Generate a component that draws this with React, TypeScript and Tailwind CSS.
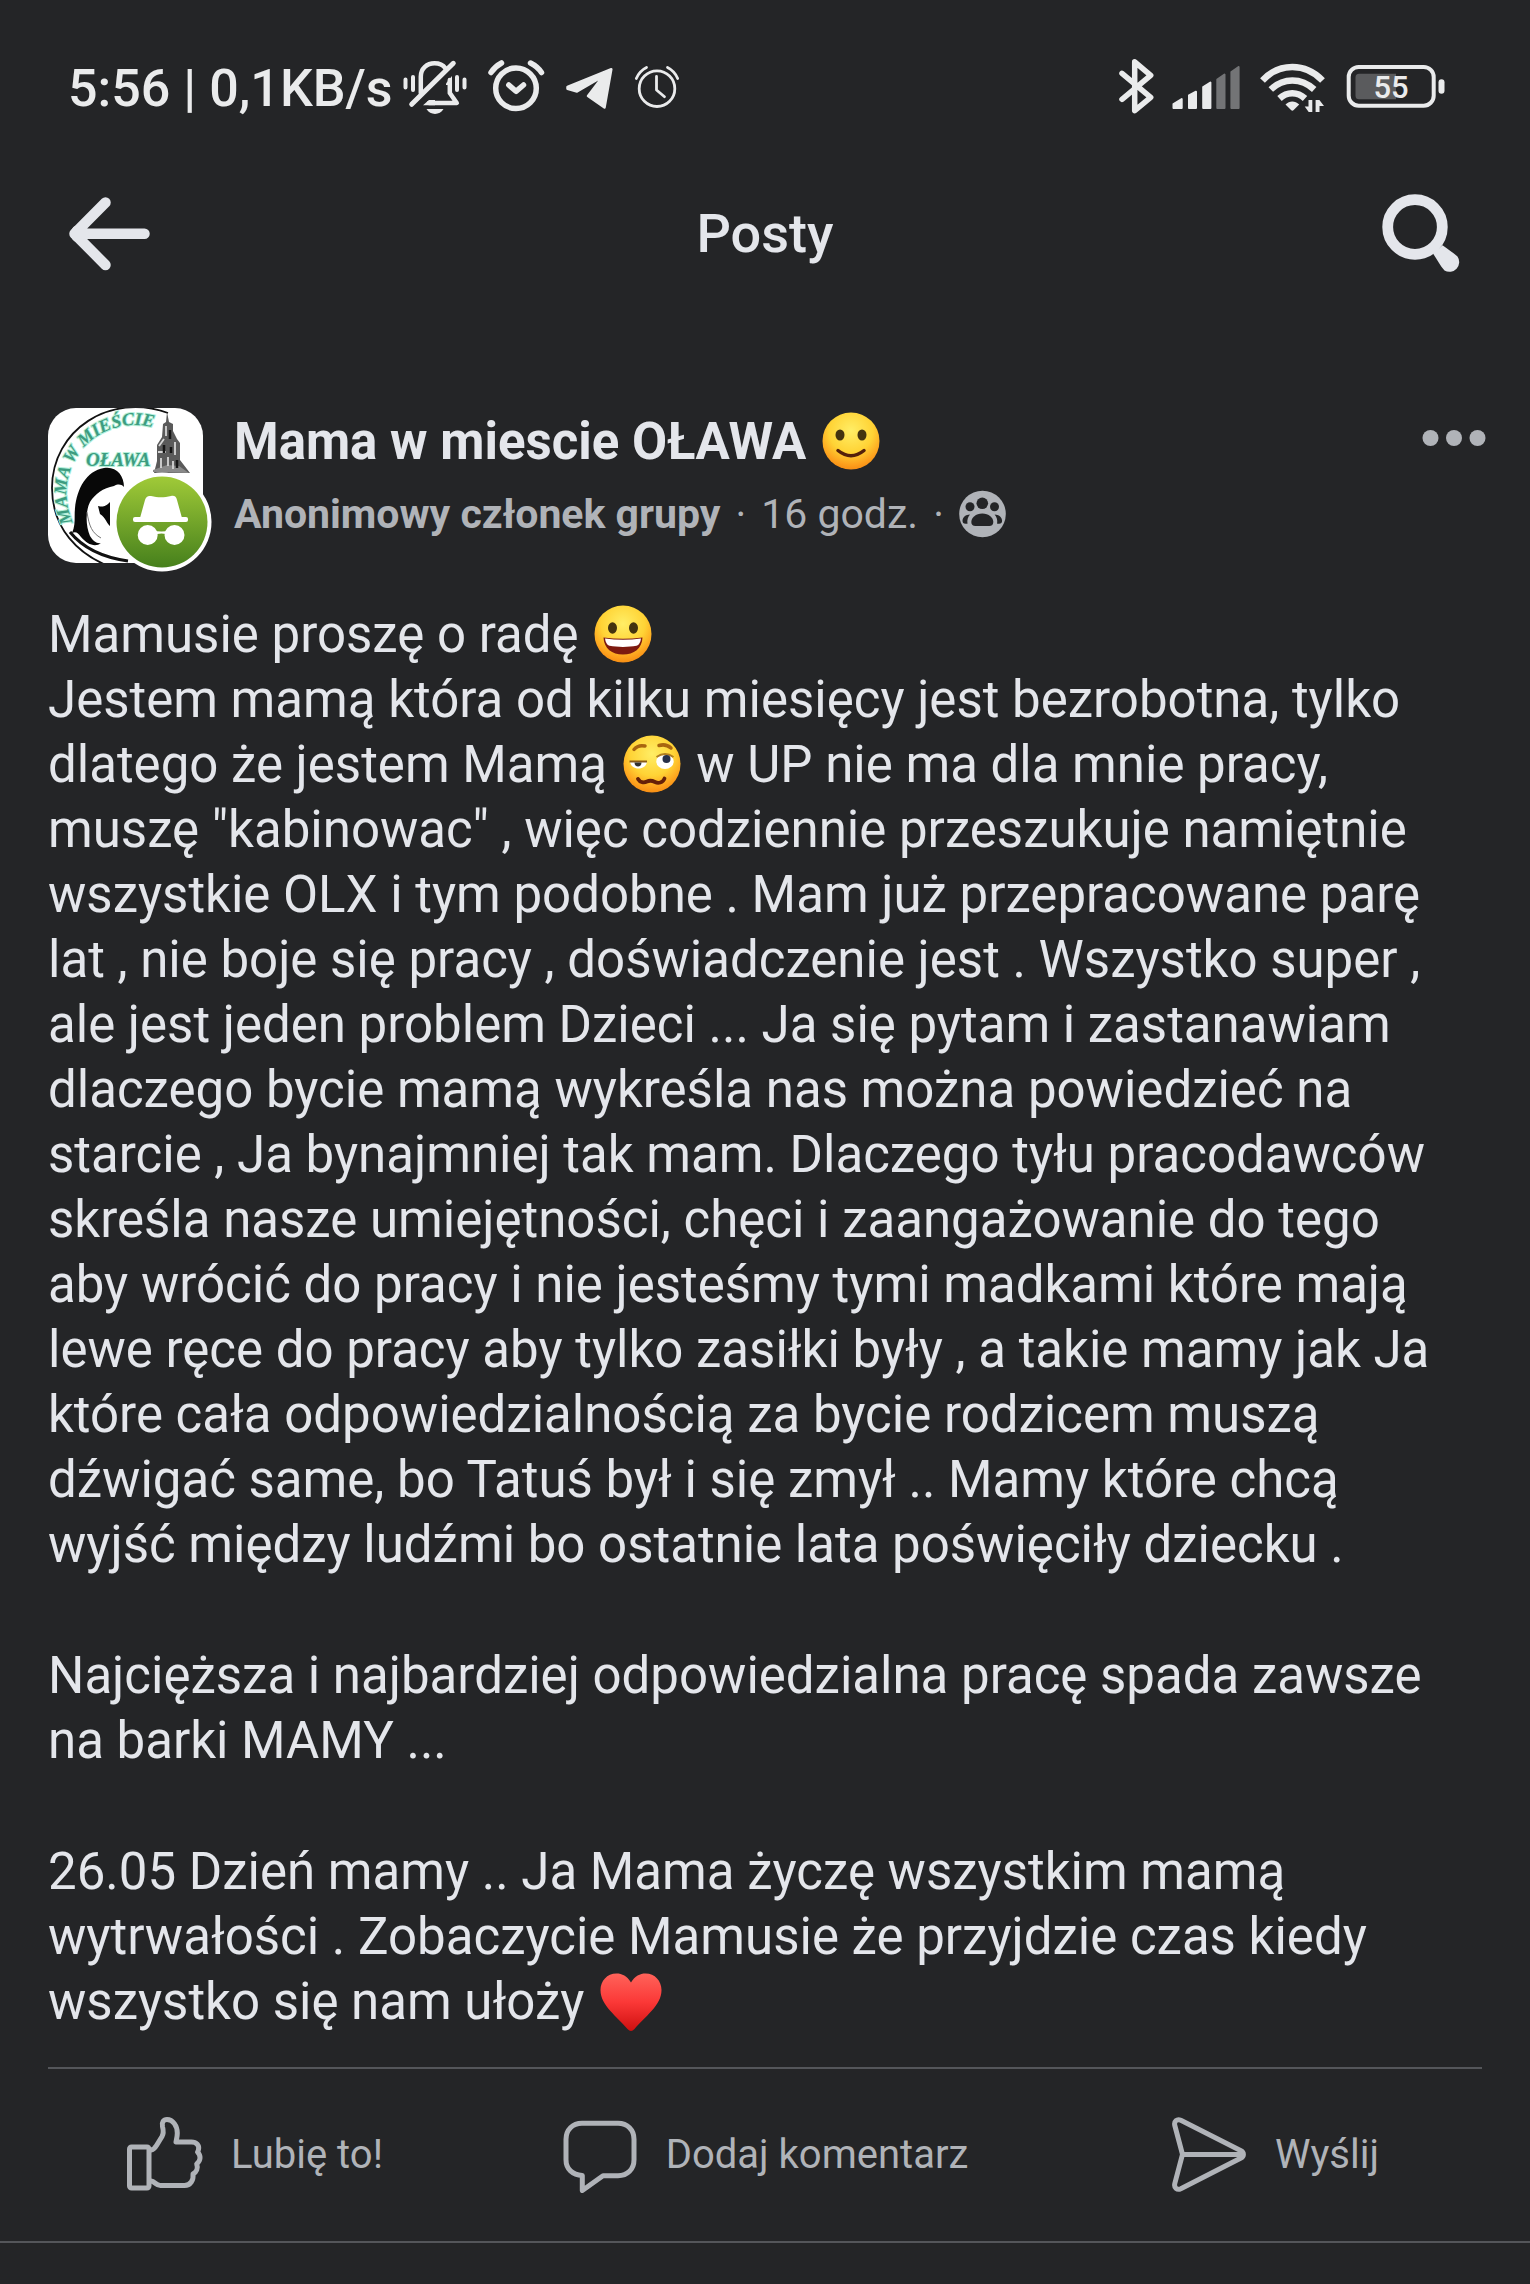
import type { ReactNode } from 'react';

interface IconProps {
  className?: string;
}

const BellOffIcon = () => (
  <svg className="w-16 h-15" viewBox="0 0 64 60" fill="none" stroke="currentColor" strokeWidth="4.5" strokeLinecap="round" strokeLinejoin="round">
    <path d="M2.500 20.500v8M10 18v13M54 18v13M61.500 20.500v8" strokeWidth="4" />
    <path d="M17.800 34V17.500C17.800 9.500 24 4.300 31.500 4.300c4.500 0 8.500 1.700 11 5" />
    <path d="M8.700 45.300 50.300 4.300" strokeWidth="5" />
    <path d="M46.800 21v13l7 10H26" />
    <path d="M43 24.500 49 17v9h-6z" fill="currentColor" stroke="none" />
    <path d="M20 46.300 26 41h6v5.300z" fill="currentColor" stroke="none" />
    <path d="M23.500 50h17c-2 3.300-5 4.900-8.500 4.900S25.500 53.300 23.500 50z" fill="currentColor" stroke="none" />
  </svg>
);

const AlarmCheckIcon = () => (
  <svg className="w-[58px] h-15" viewBox="0 0 58 60" fill="none" stroke="currentColor" strokeWidth="5.500" strokeLinecap="round" strokeLinejoin="round">
    <circle cx="29" cy="29.300" r="20.300" />
    <path d="m21.800 26 7.200 6.300 7.500-6.300" />
    <path d="M4 13.500Q8 7.500 14.500 4M43.500 4Q50.500 7.500 54.500 13.500" />
  </svg>
);

const TelegramIcon = () => (
  <svg className="w-[49px] h-15" viewBox="0 0 49 60" fill="currentColor" stroke="currentColor" strokeWidth="2.500" strokeLinejoin="round">
    <path d="M2.500 28 46.300 10.200 39.500 48.500 23 37 34 22.500c.8-1.500-.8-2.500-2.200-1.700L12 32.500 2.500 29.800z" />
  </svg>
);

const ClockIcon = () => (
  <svg className="w-[47px] h-15" viewBox="0 0 47 60" fill="none" stroke="currentColor" strokeWidth="2.800" strokeLinecap="round" strokeLinejoin="round">
    <circle cx="23" cy="29.700" r="17.800" />
    <path d="M22.500 17.500V31l8 6.700" />
    <path d="M2.300 19.500Q5.500 12 12.500 8.500M33.500 8.500Q40.500 12 43.700 19.500" />
  </svg>
);

const BluetoothIcon = () => (
  <svg className="w-[38px] h-15" viewBox="0 0 38 60" fill="none" stroke="currentColor" strokeWidth="5.500" strokeLinecap="round" strokeLinejoin="round">
    <path d="m6 14.300 28.700 24-16 13.400V2.800l16 13.500L6 40.300" />
  </svg>
);

const SignalIcon = () => (
  <svg className="w-[69px] h-15" viewBox="0 0 69 60" fill="currentColor" stroke="currentColor" strokeWidth="2" strokeLinejoin="round">
    <path d="M1.500 45 9.700 40v9H1.500zM17 36.500 24 32.700V49h-7zM31.200 28l7.200-4.500V49h-7.200z" />
    <g opacity=".4">
      <path d="M45.300 20.500l7.200-5V49h-7.200zM59.400 13l7.200-5V49h-7.200z" />
    </g>
  </svg>
);

const WifiIcon = () => (
  <svg className="w-[68px] h-15" viewBox="0 0 68 60" fill="none" stroke="currentColor" strokeWidth="6.500">
    <path d="M3.500 21.500C20 3.500 46.500 3.500 63.500 21.500" />
    <path d="M11.800 30.500c12.500-12 30.500-12 43.400 0" />
    <path d="M20.500 39.500c7.500-7 18-7 25.500 0" />
    <path d="M26.500 45.500c4-4 9.500-4 13.700 0l-5.500 5.500c-1 .9-1.700.9-2.700 0z" fill="currentColor" stroke="none" />
    <path d="M53.300 41v12h-3.600l-4-5.500h3.800V41zM56.600 53V41h3.800l4.600 6h-4.500v6z" fill="currentColor" stroke="none" />
  </svg>
);

const BatteryIcon = () => (
  <svg className="w-[101px] h-15" viewBox="0 0 101 60">
    <rect x="3.700" y="8" width="85" height="38.700" rx="10" fill="none" stroke="currentColor" strokeWidth="4" />
    <path d="M14 14.700h37v25.600H14a3.500 3.500 0 0 1-3.500-3.500V18.200a3.500 3.500 0 0 1 3.500-3.500z" fill="#5a5b5d" />
    <rect x="93.500" y="20.300" width="6" height="14.400" rx="3" fill="currentColor" />
    <text x="46" y="39" textAnchor="middle" fontSize="31" fontWeight="500" fill="currentColor">55</text>
  </svg>
);

const BackIcon = () => (
  <svg className="w-21 h-20" viewBox="0 0 84 80" fill="none" stroke="currentColor" strokeWidth="10.500" strokeLinecap="round" strokeLinejoin="round">
    <path d="M37.500 8.500 6.500 39.700 37.500 71M8 39.700h68.500" />
    <path d="M9 37v5.500l6-2.800z" />
  </svg>
);

const SearchIcon = () => (
  <svg className="w-20 h-20" viewBox="0 0 80 80">
    <circle cx="33" cy="33" r="27.300" fill="none" stroke="currentColor" strokeWidth="10.800" />
    <path d="M51 59.500 60.500 51.300C66 55.500 71 58.500 75.500 62.500A9.800 9.800 0 0 1 62.500 76.500C58 71.500 55 65.500 51 59.500z" fill="currentColor" />
  </svg>
);

const DotsIcon = () => (
  <svg className="w-16 h-15" viewBox="0 0 64 60" fill="currentColor">
    <circle cx="8.500" cy="30" r="8" />
    <circle cx="32" cy="30" r="8" />
    <circle cx="55.500" cy="30" r="8" />
  </svg>
);

const GroupIcon = () => (
  <svg className="w-12 h-12" viewBox="0 0 48 48" role="img" aria-label="Grupa">
    <circle cx="23.500" cy="24" r="23.300" fill="#b0b3b8" />
    <g fill="#242527">
      <circle cx="23.300" cy="13.300" r="5.800" />
      <circle cx="11" cy="16.700" r="4.500" />
      <circle cx="35.500" cy="16.700" r="4.500" />
      <path d="M23.300 23.500c6.500 0 11 4.200 11 8.500 0 2.600-1.500 4-4 4h-14c-2.500 0-4-1.400-4-4 0-4.300 4.500-8.500 11-8.500z" />
      <path d="M11 24.500c-4.300.2-7.300 2.500-7.500 6.300 0 1.800 1 3 3 3h2c-.6-3.800.3-6.800 2.500-9.300zM35.600 24.500c4.300.2 7.300 2.500 7.500 6.300 0 1.800-1 3-3 3h-2c.6-3.800-.3-6.800-2.500-9.300z" />
    </g>
  </svg>
);

const LikeIcon = ({ className }: IconProps) => (
  <svg className={className} viewBox="0 0 76 76" fill="none" stroke="currentColor" strokeWidth="5" strokeLinejoin="round" strokeLinecap="round">
    <rect x="2.500" y="30" width="19.500" height="41" rx="2" />
    <path d="M24 33c3-.3 4-2 5.500-4.500l5.500-9c2-3.500 1.500-6 .5-10-1-4.500 1-7 4.500-7 6 0 10.300 6.500 10.300 13.500 0 3.500-.8 6-1.300 9h15.500c5 0 8 3.500 7 7.500-.2 1.500-1 2.500-1 2.500 3.500 3.500 3.500 8.500-.8 12 1.500 4-.2 8-3.700 10 .8 6-2.500 11.500-8.500 11.500H33.500c-4.500 0-5.500-4-9.500-4.500" />
  </svg>
);

const CommentIcon = ({ className }: IconProps) => (
  <svg className={className} viewBox="0 0 76 76" fill="none" stroke="currentColor" strokeWidth="5" strokeLinejoin="round">
    <path d="M20 6.300h36c9.500 0 16 6.500 16 16v20.400c0 9.500-6.500 16-16 16H41L20.300 73.500V58.500C10.500 58 4 52 4 42.700V22.300c0-9.500 6.500-16 16-16z" />
  </svg>
);

const SendIcon = ({ className }: IconProps) => (
  <svg className={className} viewBox="0 0 76 76" fill="none" stroke="currentColor" strokeWidth="5" strokeLinejoin="round">
    <path d="M11.500 37.400 3.800 8.500C2.800 4.500 6 1.500 9.800 3.300L70 33.800c3.200 1.700 3.200 5.500 0 7.200L9.800 71.700C6 73.500 2.800 70.500 3.800 66.500zM11.500 37.400H71" />
  </svg>
);

const GroupAvatar = () => (
  <svg className="w-[164px] h-[164px] shrink-0" viewBox="0 0 164 164" role="img" aria-label="Mama w mieście Oława">
    <defs>
      <clipPath id="avatarClip">
        <rect width="155" height="155" rx="28" />
      </clipPath>
      <linearGradient id="badgeFill" x1="0" y1="0" x2="0" y2="1">
        <stop offset="0" stopColor="#a0ca38" />
        <stop offset="1" stopColor="#46801c" />
      </linearGradient>
      <path id="nameArc" d="M25 114A68 68 0 0 1 122 27" />
    </defs>
    <rect width="155" height="155" rx="28" fill="#fff" />
    <g clipPath="url(#avatarClip)">
      <path d="M120 5C62-16 4 22 4 80c0 42 28 66 54 77" fill="none" stroke="#111" strokeWidth="1.800" />
      <path d="M22 124c12 15 30 25 58 29" fill="none" stroke="#111" strokeWidth="3" />
      <g fill="#3d9c80" stroke="#b5f0da" strokeWidth="2" paintOrder="stroke" fontFamily="'Liberation Serif', serif" fontStyle="italic" fontWeight="700">
        <text fontSize="18">
          <textPath href="#nameArc">MAMA W MIEŚCIE</textPath>
        </text>
        <text x="38" y="58" fontSize="19">OŁAWA</text>
      </g>
      <path d="M24 125c4-9 2-16 3-25 2-19 11-37 29-40 12-2 20 7 20 19-3-3-6-3-10-1-11 2-19 8-24 16-5 10-4 25 0 34 3 5 7 8 11 7-6 5-14 1-20-6-3-4-5-6-9-4z" fill="#080808" />
      <path d="M39 104c2 14 5 21 14 26" fill="none" stroke="#777" strokeWidth="1" />
      <path d="M50 98c5 1 7 1 12-4v24c-3-2-4-8-10-12z" fill="#080808" />
      <g fill="#5a5a5a">
        <path d="M119 4l2 10 4 2v7l4 8 3 4v17l10 13h-36l3-12V37l5-8 1-13 3-2z" />
        <path d="M105 62l14-5 12 1 10 7-36-1z" fill="#898989" />
      </g>
      <path d="M111 38l5-7M127 34v13M118 18v10M113 50v10M120 49v9M125 53v8M110 44h8" stroke="#d5d5d5" strokeWidth="1.800" fill="none" />
      <path d="M122 22v9M116 37v8M123 39v6M129 52v8" stroke="#161616" strokeWidth="2.500" fill="none" />
    </g>
    <circle cx="114" cy="114" r="49.500" fill="#fff" />
    <circle cx="114" cy="114" r="45.500" fill="url(#badgeFill)" />
    <g fill="#fff">
      <rect x="85" y="109" width="55" height="5" rx="2" />
      <path d="M92 110 97 92c1-3.500 3-4.500 6-4 7 1.800 13 1.800 20 0 3.500-.6 5.200.5 6 4l5 18z" />
      <circle cx="99.700" cy="127" r="10" />
      <circle cx="126.500" cy="127" r="10" />
      <path d="M105 122.500q8.500 2 17 0v4.500q-8.500-3-17 0z" />
    </g>
  </svg>
);

const emojiClass = 'inline-block w-[58px] h-[58px] mx-[3px] align-[-11px]';

const FaceGradient = ({ id }: { id: string }) => (
  <defs>
    <radialGradient id={id} cx=".5" cy=".32" r=".7">
      <stop offset="0" stopColor="#ffee66" />
      <stop offset=".55" stopColor="#ffd335" />
      <stop offset=".85" stopColor="#fda01d" />
      <stop offset="1" stopColor="#f58a13" />
    </radialGradient>
  </defs>
);

const SmileEmoji = () => (
  <svg className={emojiClass} viewBox="0 0 58 58" role="img" aria-label="🙂">
    <FaceGradient id="smileFace" />
    <circle cx="29" cy="29" r="28.500" fill="url(#smileFace)" />
    <ellipse cx="18" cy="23" rx="4.500" ry="5.500" fill="#43330f" />
    <ellipse cx="40" cy="23" rx="4.500" ry="5.500" fill="#43330f" />
    <path d="M16 38.500Q29 49 42 38.500" fill="none" stroke="#54200b" strokeWidth="3.500" strokeLinecap="round" />
  </svg>
);

const GrinEmoji = () => (
  <svg className={emojiClass} viewBox="0 0 58 58" role="img" aria-label="😀">
    <FaceGradient id="grinFace" />
    <circle cx="29" cy="29" r="28.500" fill="url(#grinFace)" />
    <ellipse cx="18.500" cy="23" rx="4.500" ry="5.700" fill="#43330f" />
    <ellipse cx="39.500" cy="23" rx="4.500" ry="5.700" fill="#43330f" />
    <path d="M9.500 32.500Q29 35 48.500 32.500C48 43.500 40 49.500 29 49.500S10 43.500 9.500 32.500z" fill="#7d1a10" />
    <path d="M11 33.500Q29 36 47 33.500c-.5 4-2 6.500-4.500 7.300-8 1.500-19 1.500-27 0-2.500-.8-4-3.300-4.500-7.300z" fill="#fff" />
  </svg>
);

const WoozyEmoji = () => (
  <svg className={emojiClass} viewBox="0 0 58 58" role="img" aria-label="🥴">
    <FaceGradient id="woozyFace" />
    <circle cx="29" cy="29" r="28.500" fill="url(#woozyFace)" />
    <path d="M11 14.500Q15 9.500 22 11M36 10.500Q43 8.500 48 13" fill="none" stroke="#a8650f" strokeWidth="3.500" strokeLinecap="round" />
    <path d="M7 26.500h17c-.5 4.500-4 7-8.500 7S7.500 31 7 26.500z" fill="#fff" />
    <path d="M6.500 26.500H24" stroke="#8a5a16" strokeWidth="2" />
    <path d="M11.500 27.500h7c0 2.500-1.500 4-3.500 4s-3.500-1.500-3.500-4z" fill="#33312e" />
    <ellipse cx="42" cy="26.500" rx="8.700" ry="7.500" fill="#fff" />
    <path d="M33.500 22Q42 16 50.500 22" fill="none" stroke="#b07d20" strokeWidth="1.800" />
    <circle cx="43.500" cy="24" r="4" fill="#26304a" />
    <path d="M15 44c2 3.500 6 4 9 2.500s5-1 8 .5 8 1 9.500-3.500" fill="none" stroke="#662008" strokeWidth="3.800" strokeLinecap="round" strokeLinejoin="round" />
  </svg>
);

const HeartEmoji = () => (
  <svg className="inline-block w-[62px] h-[58px] mx-[3px] align-[-12px]" viewBox="0 0 62 58" role="img" aria-label="❤️">
    <defs>
      <linearGradient id="heartFill" x1="0" y1="0" x2="0" y2="1">
        <stop offset="0" stopColor="#ff635a" />
        <stop offset=".5" stopColor="#fb3837" />
        <stop offset="1" stopColor="#cf1010" />
      </linearGradient>
    </defs>
    <path d="M31 9.500C35 3 40 .5 45.500.5 55 .5 61.500 8 61.500 17c0 16-17 26.500-27 39-2.500 2.500-4.500 2.500-7 0C17.500 43.500.5 33 .5 17 .5 8 7 .5 16.500.5 22 .5 27 3 31 9.500z" fill="url(#heartFill)" />
  </svg>
);

interface ActionProps {
  icon: ReactNode;
  label: string;
}

const PostAction = ({ icon, label }: ActionProps) => (
  <button type="button" className="flex items-center justify-center gap-7 text-[40px] leading-14">
    {icon}
    {label}
  </button>
);

const actions: ActionProps[] = [
  { icon: <LikeIcon className="w-19 h-19" />, label: 'Lubię to!' },
  { icon: <CommentIcon className="w-19 h-19" />, label: 'Dodaj komentarz' },
  { icon: <SendIcon className="w-19 h-19" />, label: 'Wyślij' }
];

const App = () => {
  return (
    <div className="min-h-screen bg-[#242527] text-[#e4e6eb] font-[Roboto,sans-serif]">
      {/* Status bar */}
      <div className="flex items-center justify-between pt-[57px] pb-[73px] pl-17 pr-21 text-[#eaebec]">
        <div className="flex items-center gap-5">
          <span className="text-[52px] leading-16 font-medium -mr-[10px]">5:56 | 0,1KB/s</span>
          <BellOffIcon />
          <AlarmCheckIcon />
          <TelegramIcon />
          <ClockIcon />
        </div>
        <div className="flex items-center gap-[18px]">
          <BluetoothIcon />
          <SignalIcon />
          <WifiIcon />
          <BatteryIcon />
        </div>
      </div>

      {/* Top bar */}
      <header className="grid grid-cols-[1fr_auto_1fr] items-center px-17">
        <button type="button" aria-label="Wstecz" className="justify-self-start">
          <BackIcon />
        </button>
        <h1 className="text-[54px] leading-16 font-medium">Posty</h1>
        <button type="button" aria-label="Szukaj" className="justify-self-end">
          <SearchIcon />
        </button>
      </header>

      <article className="pt-[134px]">
        {/* Author */}
        <div className="flex items-start gap-[22px] pl-12 pr-11">
          <GroupAvatar />
          <div className="flex-1 pt-[2px]">
            <h2 className="text-[51px] leading-16 font-bold">
              Mama w miescie OŁAWA <SmileEmoji />
            </h2>
            <div className="mt-3 flex items-center gap-[15px] text-[41px] leading-14 text-[#b0b3b8]">
              <span className="font-bold">Anonimowy członek grupy</span>
              <span>·</span>
              <span>16 godz.</span>
              <span>·</span>
              <GroupIcon />
            </div>
          </div>
          <button type="button" aria-label="Więcej" className="text-[#b0b3b8]">
            <DotsIcon />
          </button>
        </div>

        {/* Post text */}
        <div className="mt-[30px] pl-12 pr-20 space-y-[66px] text-[51px] leading-[65px]">
          <p>
            Mamusie proszę o radę <GrinEmoji />
            <br />
            Jestem mamą która od kilku miesięcy jest bezrobotna, tylko dlatego że jestem Mamą <WoozyEmoji /> w UP nie
            ma dla mnie pracy, muszę "kabinowac" , więc codziennie przeszukuje namiętnie wszystkie OLX i tym podobne .
            Mam już przepracowane parę lat , nie boje się pracy , doświadczenie jest . Wszystko super , ale jest jeden
            problem Dzieci ... Ja się pytam i zastanawiam dlaczego bycie mamą wykreśla nas można powiedzieć na starcie
            , Ja bynajmniej tak mam. Dlaczego tyłu pracodawców skreśla nasze umiejętności, chęci i zaangażowanie do
            tego aby wrócić do pracy i nie jesteśmy tymi madkami które mają lewe ręce do pracy aby tylko zasiłki były ,
            a takie mamy jak Ja które cała odpowiedzialnością za bycie rodzicem muszą dźwigać same, bo Tatuś był i się
            zmył .. Mamy które chcą wyjść między ludźmi bo ostatnie lata poświęciły dziecku .
          </p>
          <p>Najcięższa i najbardziej odpowiedzialna pracę spada zawsze na barki MAMY ...</p>
          <p>
            26.05 Dzień mamy .. Ja Mama życzę wszystkim mamą wytrwałości . Zobaczycie Mamusie że przyjdzie czas kiedy
            wszystko się nam ułoży <HeartEmoji />
          </p>
        </div>

        {/* Actions */}
        <div className="mx-12 mt-[33px] border-t-2 border-[#54565a]" />
        <div className="grid grid-cols-3 py-12 border-b-2 border-[#54565a] text-[#b0b3b8]">
          {actions.map((action) => (
            <PostAction key={action.label} icon={action.icon} label={action.label} />
          ))}
        </div>
      </article>
    </div>
  );
};

export default App;
